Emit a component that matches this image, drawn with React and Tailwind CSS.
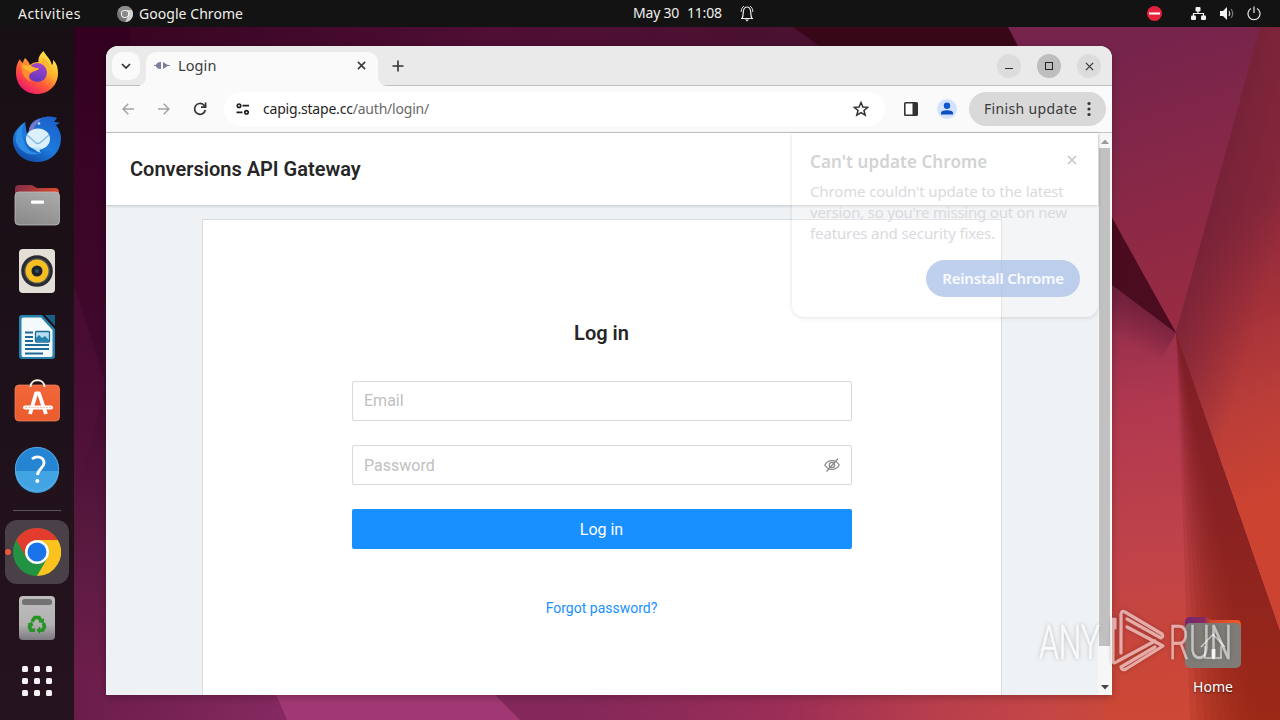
import React from "react";

const ui = "font-['Noto_Sans',sans-serif]";

const foldEdges = [1190, 1197, 1204, 1211, 1218, 1225, 1231, 1237, 1243, 1248, 1253, 1258];

function Wallpaper() {
  return (
    <svg className="absolute inset-0" width="1280" height="720" viewBox="0 0 1280 720">
      <defs>
        <linearGradient id="w-top" x1="74" y1="0" x2="1000" y2="0" gradientUnits="userSpaceOnUse">
          <stop offset="0" stopColor="#34031f" />
          <stop offset="0.45" stopColor="#4f0e34" />
          <stop offset="0.8" stopColor="#4a1130" />
          <stop offset="1" stopColor="#400a20" />
        </linearGradient>
        <linearGradient id="w-left" x1="0" y1="27" x2="0" y2="720" gradientUnits="userSpaceOnUse">
          <stop offset="0" stopColor="#33001f" />
          <stop offset="0.5" stopColor="#420a2e" />
          <stop offset="0.75" stopColor="#5a1a40" />
          <stop offset="1" stopColor="#741f4f" />
        </linearGradient>
        <linearGradient id="w-bottom" x1="74" y1="0" x2="1280" y2="0" gradientUnits="userSpaceOnUse">
          <stop offset="0" stopColor="#6b1d4a" />
          <stop offset="0.17" stopColor="#852960" />
          <stop offset="0.42" stopColor="#84285a" />
          <stop offset="0.58" stopColor="#9a2d57" />
          <stop offset="0.72" stopColor="#b93f4c" />
          <stop offset="0.8" stopColor="#c34546" />
          <stop offset="0.87" stopColor="#cb4838" />
          <stop offset="1" stopColor="#b4341f" />
        </linearGradient>
        <linearGradient id="w-ru" x1="1112" y1="60" x2="1190" y2="310" gradientUnits="userSpaceOnUse">
          <stop offset="0" stopColor="#77244c" />
          <stop offset="0.5" stopColor="#882847" />
          <stop offset="1" stopColor="#982b42" />
        </linearGradient>
        <linearGradient id="w-rr" x1="1195" y1="230" x2="1310" y2="480" gradientUnits="userSpaceOnUse">
          <stop offset="0" stopColor="#8a283b" />
          <stop offset="0.35" stopColor="#a43139" />
          <stop offset="0.65" stopColor="#b93d39" />
          <stop offset="1" stopColor="#cc4331" />
        </linearGradient>
        <linearGradient id="w-rrShade" x1="1218" y1="180" x2="1290" y2="200" gradientUnits="userSpaceOnUse">
          <stop offset="0" stopColor="#6d1f38" stopOpacity="0.65" />
          <stop offset="1" stopColor="#6d1f38" stopOpacity="0" />
        </linearGradient>
        <linearGradient id="w-rl" x1="1112" y1="300" x2="1150" y2="720" gradientUnits="userSpaceOnUse">
          <stop offset="0" stopColor="#8f2c4b" />
          <stop offset="0.25" stopColor="#b0384f" />
          <stop offset="0.6" stopColor="#c0434a" />
          <stop offset="0.85" stopColor="#c94639" />
          <stop offset="1" stopColor="#cd4835" />
        </linearGradient>
        <linearGradient id="w-wedge" x1="0" y1="333" x2="0" y2="720" gradientUnits="userSpaceOnUse">
          <stop offset="0" stopColor="#7c1c24" />
          <stop offset="0.5" stopColor="#86201f" />
          <stop offset="1" stopColor="#982614" />
        </linearGradient>
        <linearGradient id="w-fold" x1="1143" y1="309" x2="1125" y2="342" gradientUnits="userSpaceOnUse">
          <stop offset="0" stopColor="#5c1830" stopOpacity="0.55" />
          <stop offset="1" stopColor="#5c1830" stopOpacity="0" />
        </linearGradient>
      </defs>
      <rect width="1280" height="720" fill="url(#w-top)" />
      <rect width="130" height="720" fill="url(#w-left)" />
      <path d="M74 285L106 385L74 500Z" fill="#5a1440" opacity="0.35" />
      <rect y="680" width="1280" height="40" fill="url(#w-bottom)" />
      <path d="M270 680H480L520 720H287Z" fill="#a23873" />
      <path d="M793 27H1008L1018 50H825Z" fill="#380818" />
      <path d="M1008 27H1262L1176 333L1090 180Z" fill="url(#w-ru)" />
      <path d="M1260 27H1280V632L1176 333Z" fill="url(#w-rr)" />
      <path d="M1260 27H1280V632L1176 333Z" fill="url(#w-rrShade)" />
      <path d="M1105 205L1176 333L1105 280Z" fill="#4a0c1e" />
      <path d="M1105 280L1176 333L1280 632V720H1105Z" fill="url(#w-rl)" />
      <path d="M1105 280L1176 333L1150 380H1105Z" fill="url(#w-fold)" />
      {foldEdges.map((x) => (
        <path key={x} d={`M1176 333L1280 632V720H${x}Z`} fill="url(#w-wedge)" opacity="0.19" />
      ))}
    </svg>
  );
}

function Firefox() {
  return (
    <svg width="48" height="48" viewBox="0 0 48 48">
      <defs>
        <linearGradient id="ff1" x1="38" y1="6" x2="12" y2="42" gradientUnits="userSpaceOnUse">
          <stop offset="0" stopColor="#ffe94a" />
          <stop offset="0.35" stopColor="#ffb02c" />
          <stop offset="0.65" stopColor="#ff5a37" />
          <stop offset="1" stopColor="#ee1a6b" />
        </linearGradient>
        <linearGradient id="ff2" x1="28" y1="14" x2="22" y2="34" gradientUnits="userSpaceOnUse">
          <stop offset="0" stopColor="#a848c8" />
          <stop offset="1" stopColor="#5b35bd" />
        </linearGradient>
      </defs>
      <path d="M30.500 2C27 5 25 9 25.500 13C22 13 19 14 17 16C16 13 14 11 12 9C11 11 10 12 10 14C8 13 7 11 7 10C3 15 3 21 3 24C3 36 12 45 24 45C36 45 45 36 45 24C45 18 43 13 40 11C40 14 40 15 39 16C37 9 33 7 30.500 2Z" fill="url(#ff1)" />
      <circle cx="24.500" cy="23.500" r="9.500" fill="url(#ff2)" />
      <path d="M8 15C11 17 14 16 17 16C20 19 24 19 26 19.500C25 22 20 22 17 25C15 28 16 31 19 33C12 31 8 25 8 15Z" fill="#ff8a30" />
      <path d="M9 15C12 17 14 16 17 16C20 19 24 19 26 19.500C25 21 21 21.500 18 23C13 22 10 19 9 15Z" fill="#ffb52e" />
      <path d="M28 14C33 16 35 22 34 27C38 24 38 17 34 12L30 9Z" fill="#ffb72f" />
    </svg>
  );
}

function Thunderbird() {
  return (
    <svg width="50" height="48" viewBox="0 0 50 48">
      <defs>
        <linearGradient id="tb1" x1="38" y1="4" x2="16" y2="44" gradientUnits="userSpaceOnUse">
          <stop offset="0" stopColor="#1b62cc" />
          <stop offset="0.6" stopColor="#1d7bdc" />
          <stop offset="1" stopColor="#1252ad" />
        </linearGradient>
      </defs>
      <path d="M13 7C5 13 1 18 1 25C1 38 12 47 25 47C39 47 49 37 49 23C49 17 46 13 44 10L48 8C46 7 44 7 42 7L45 3C40 1 34 1 29 3C21 5 18 9 17 15L15 19C14 15 14 11 13 7Z" fill="url(#tb1)" />
      <path d="M13 7C9 13 9 20 13 29C16 36 21 38 28 38C20 42 8 38 4 27C3 18 7 11 13 7Z" fill="#2f8ce6" />
      <path d="M17 14C20 7 25 4 29 4C25 8 22 11 22 14L17 17Z" fill="#7c78c8" />
      <ellipse cx="26" cy="24" rx="12" ry="10.500" fill="#dceffd" />
      <path d="M21 32C22 35 26 37 29 38C27 36 27 34 30 33Z" fill="#b7e3fb" />
      <path d="M15 20L24 28C26 29 27 29 29 27L37 20" fill="none" stroke="#83b9e2" strokeWidth="1.400" />
      <circle cx="27" cy="8.500" r="1.300" fill="#bfe3fc" />
    </svg>
  );
}

function Files() {
  return (
    <svg width="48" height="48" viewBox="0 0 48 48">
      <defs>
        <linearGradient id="fl1" x1="0" y1="0" x2="1" y2="0.3">
          <stop offset="0" stopColor="#7d2c49" />
          <stop offset="1" stopColor="#de4a2c" />
        </linearGradient>
        <linearGradient id="fl2" x1="0.300" y1="1" x2="0.700" y2="0">
          <stop offset="0" stopColor="#8b8b8b" />
          <stop offset="1" stopColor="#a9a9a9" />
        </linearGradient>
      </defs>
      <path d="M2 8Q2 4 6 4H18Q20 4 21.500 5.500Q23 7 25 7H42Q46 7 46 11V20H2Z" fill="url(#fl1)" />
      <rect x="2" y="11" width="44.500" height="33" rx="4" fill="url(#fl2)" stroke="#bdbdbd" strokeWidth="0.800" />
      <rect x="18" y="19.500" width="13" height="3.200" rx="1" fill="#fff" />
    </svg>
  );
}

function Speaker() {
  return (
    <svg width="48" height="48" viewBox="0 0 48 48">
      <rect x="6" y="2" width="36" height="44" rx="4" fill="#e3dfd7" />
      <circle cx="24" cy="24" r="15.800" fill="#2a2b33" />
      <circle cx="24" cy="24" r="12.800" fill="#50525a" />
      <circle cx="24" cy="24" r="11.500" fill="#f5bf22" />
      <circle cx="24" cy="24" r="5.500" fill="#1b2230" />
      <circle cx="24" cy="24" r="2" fill="#3b4a5c" />
    </svg>
  );
}

function Writer() {
  return (
    <svg width="48" height="48" viewBox="0 0 48 48">
      <path d="M9 2H29L42 16V43Q42 46 39 46H9Q6 46 6 43V5Q6 2 9 2Z" fill="#2581ad" />
      <path d="M32 2H42V13Z" fill="#1b5d86" />
      <path d="M10 4.500H28L39.500 17V42Q39.500 44 37.500 44H10Q8.500 44 8.500 42V6.500Q8.500 4.500 10 4.500Z" fill="#f4fafc" />
      <path d="M12 19.500H20M12 24H20M12 28H20M12 32H36M12 36H36M12 40.500H30" stroke="#1e6a94" strokeWidth="2" />
      <rect x="22.500" y="18.500" width="14" height="10.500" rx="1" fill="#b5def3" stroke="#1e6a94" strokeWidth="1.300" />
      <path d="M23 28V25L26 22L29 25L32 23L36 27V28.500Z" fill="#2581ad" />
    </svg>
  );
}

function Software() {
  return (
    <svg width="48" height="48" viewBox="0 0 48 48">
      <defs>
        <linearGradient id="sw" x1="0" y1="0" x2="0" y2="1">
          <stop offset="0" stopColor="#f3673a" />
          <stop offset="1" stopColor="#ea5b2d" />
        </linearGradient>
      </defs>
      <rect x="2" y="6" width="44.500" height="36" rx="4" fill="url(#sw)" stroke="#f28a64" strokeWidth="0.700" />
      <path d="M17.500 8C17.500 -1 31.500 -1 31.500 8" fill="none" stroke="#fff0e6" strokeWidth="2" />
      <path d="M17 35L23 14.500H26L33 35" fill="none" stroke="#fff" strokeWidth="3.800" strokeLinejoin="round" />
      <path d="M12 28.500H38" stroke="#fff" strokeWidth="4" strokeLinecap="round" />
      <path d="M12 28.500H38" stroke="#f3b296" strokeWidth="0.800" strokeDasharray="2 1" />
    </svg>
  );
}

function Help() {
  return (
    <svg className="-mt-px" width="48" height="48" viewBox="0 0 48 48">
      <circle cx="24" cy="24" r="22" fill="#2585d2" />
      <path d="M2 26H46A22 22 0 0 1 2 26Z" fill="#42a3e3" />
      <circle cx="24" cy="24" r="21.600" fill="none" stroke="#5cb1ea" strokeWidth="0.800" />
      <path d="M19 14C24 10 31 12 31 18C31 23 24.500 24 24.500 30" fill="none" stroke="#fff" strokeWidth="2.800" />
      <circle cx="24.300" cy="36" r="2" fill="#fff" />
    </svg>
  );
}

function Chrome({ size = 48, mono = false }) {
  const c = mono ? ["#8c8c8c", "#d2d2d2", "#767676", "#8a8a8a"] : ["#e33b2e", "#fcc31e", "#229342", "#1a73e8"];
  return (
    <svg width={size} height={size} viewBox="0 0 48 48">
      <circle cx="24" cy="24" r="24" fill={c[2]} />
      <path d="M24 12H44.800A24 24 0 0 1 24 48L34.400 30Z" fill={c[1]} />
      <path d="M3.200 12A24 24 0 0 1 44.800 12H24L13.600 30Z" fill={c[0]} />
      <circle cx="24" cy="24" r="12" fill="#fff" />
      <circle cx="24" cy="24" r="9.500" fill={c[3]} />
    </svg>
  );
}

function Trash() {
  return (
    <svg width="48" height="48" viewBox="0 0 48 48">
      <defs>
        <linearGradient id="tr" x1="0" y1="0" x2="0" y2="1">
          <stop offset="0" stopColor="#bdbdbd" />
          <stop offset="0.650" stopColor="#b2b2b2" />
          <stop offset="1" stopColor="#7c7880" />
        </linearGradient>
      </defs>
      <rect x="6" y="2" width="36" height="44" rx="4" fill="url(#tr)" />
      <rect x="9" y="5" width="30" height="6" rx="2.500" fill="#727272" />
      <g fill="none" stroke="#269326" strokeWidth="3.600">
        <path d="M19 27.500L21.700 23.500H26L28 27" />
        <path d="M30.500 29L31.500 33L29.500 36.300H26" />
        <path d="M22 36.300H18L16.500 33L18 29.500" />
      </g>
      <path d="M25.500 28.500L31 24V29Z M27 32.500V40L23.500 36.300Z M14 30L19 27.500L20.500 32Z" fill="#269326" />
    </svg>
  );
}

function Grid9() {
  return (
    <div className="grid grid-cols-3 gap-[6px]">
      {Array.from({ length: 9 }, (_, i) => (
        <span key={i} className="h-[6px] w-[6px] rounded-[1.500px] bg-[#f6f2f5]" />
      ))}
    </div>
  );
}

function DockItem({ children, className = "" }) {
  return <div className={"flex h-[66px] w-full shrink-0 items-center justify-center " + className}>{children}</div>;
}

function Dock() {
  return (
    <aside className="flex h-full w-[74px] shrink-0 flex-col items-center bg-gradient-to-b from-[#180f15] to-[#25131e] pt-[13px]">
      <DockItem><Firefox /></DockItem>
      <DockItem><Thunderbird /></DockItem>
      <DockItem><Files /></DockItem>
      <DockItem><Speaker /></DockItem>
      <DockItem><Writer /></DockItem>
      <DockItem><Software /></DockItem>
      <DockItem><Help /></DockItem>
      <div className="mt-2 mb-2 h-px w-12 shrink-0 bg-[#5d535a]" />
      <DockItem className="relative">
        <div className="flex h-16 w-16 items-center justify-center rounded-xl bg-[#4a4047]"><Chrome /></div>
        <span className="absolute left-[5px] h-[6px] w-[6px] rounded-full bg-[#ef5a35]" />
      </DockItem>
      <DockItem><Trash /></DockItem>
      <div className="mt-[15px]"><Grid9 /></div>
    </aside>
  );
}

function TopBar() {
  return (
    <header className={"relative flex h-[27px] shrink-0 items-center bg-[#131313] text-[14px] leading-[26px] text-[#f0eeeb] " + ui}>
      <span className="ml-[18px] w-[99px] tracking-[0.450px]">Activities</span>
      <span className="flex w-[22px] items-center"><Chrome size={16} mono /></span>
      <span className="w-[494px] tracking-[0.050px]">Google Chrome</span>
      <span className="-mt-px w-[54px] tracking-[-0.200px]">May 30</span>
      <span className="-mt-px w-[53px] tracking-[-0.200px]">11:08</span>
      <svg className="-mt-px" width="14" height="17" viewBox="0 0 14 17" fill="none" stroke="#eee" strokeWidth="1.200">
        <path d="M1 13.500H13M2 13.500C3.500 11 3 8 3.500 5.500C4 3 5.500 2 7 2C8.500 2 10 3 10.500 5.500C11 8 10.500 11 12 13.500" />
        <path d="M1.200 7C1 4 2.500 2 4 1M12.800 7C13 4 11.500 2 10 1" strokeWidth="0.900" />
        <path d="M5 14.500H9L7 16.500Z" fill="#eee" stroke="none" />
      </svg>
      <div className="-mt-px ml-auto flex items-center pr-[19px]">
        <svg width="15" height="15" viewBox="0 0 15 15"><circle cx="7.500" cy="7.500" r="7.500" fill="#e6213c" /><rect x="2" y="6.500" width="11" height="2" fill="#fff" /></svg>
        <svg className="ml-[28px]" width="17" height="15" viewBox="0 0 17 15" fill="#f2f2f2">
          <rect x="5.500" y="1" width="5" height="4.500" rx="1" /><rect x="1" y="9.500" width="5" height="4.500" rx="1" /><rect x="11" y="9.500" width="5" height="4.500" rx="1" />
          <path d="M8 5V7.500M3.500 10V7.500H13.500V10" fill="none" stroke="#f2f2f2" strokeWidth="1.200" />
        </svg>
        <svg className="ml-[12px]" width="16" height="15" viewBox="0 0 16 15">
          <path d="M1 5H4L8 1V14L4 10H1Z" fill="#f2f2f2" />
          <path d="M10 5Q11.500 7.500 10 10" fill="none" stroke="#ccc" strokeWidth="1.200" />
          <path d="M12 3Q15.500 7.500 12 12" fill="none" stroke="#777" strokeWidth="1.200" />
        </svg>
        <svg className="ml-[12px]" width="14" height="15" viewBox="0 0 14 15" fill="none" stroke="#e8e8e8" strokeWidth="1.200">
          <path d="M4 2.500A6 6 0 1 0 10 2.500M7 0.500V7" />
        </svg>
      </div>
    </header>
  );
}

const X = ({ size = 10, w = 1.5 }) => (
  <svg width={size} height={size} viewBox="0 0 10 10" fill="none" stroke="currentColor" strokeWidth={w}><path d="M1 1L9 9M9 1L1 9" /></svg>
);

function TabStrip() {
  return (
    <div className={"flex h-[40px] shrink-0 border-b border-[#bdbebe] bg-[#eaeaea] text-[#3c3c3c] " + ui}>
      <div className="mt-[6px] ml-[6px] flex h-[28px] w-[28px] shrink-0 items-center justify-center rounded-[10px] bg-[#fafafa]">
        <svg width="10" height="7" viewBox="0 0 10 7" fill="none" stroke="#333" strokeWidth="1.700"><path d="M1 1L5 5L9 1" /></svg>
      </div>
      <svg className="mt-auto -mb-px shrink-0" width="6" height="10" viewBox="0 0 6 10"><path d="M6 0V10H-4Q6 10 6 0Z" fill="#fafafa" /></svg>
      <div className="mt-[6px] -mb-px flex w-[232px] shrink-0 items-center rounded-t-[10px] bg-[#fafafa] pb-[8px] pl-[8px]">
        <svg width="16" height="9" viewBox="0 0 16 9" fill="#7b7f9c">
          <path d="M1.500 4.500Q3 1 6.500 1H7V8H6.500Q3 8 1.500 4.500Z M9 1L14.500 4.500L9 8Z" /><path d="M0 3.900H3V5.100H0Z M13 3.900H16V5.100H13Z" />
        </svg>
        <span className="ml-[8px] text-[14.500px] leading-5 tracking-[0.100px]">Login</span>
        <span className="mr-[12px] ml-auto"><X size={9} w={1.8} /></span>
      </div>
      <svg className="mt-auto -mb-px shrink-0" width="10" height="10" viewBox="0 0 10 10"><path d="M0 0V10H10Q0 10 0 0Z" fill="#fafafa" /></svg>
      <svg className="mt-[14px] ml-[4px]" width="12" height="12" viewBox="0 0 12 12" stroke="#333" strokeWidth="1.600"><path d="M6 0.500V11.500M0.500 6H11.500" /></svg>
      <div className="mt-[8px] mr-[11px] ml-auto flex gap-4">
        <span className="flex h-6 w-6 items-end justify-center rounded-full bg-[#dcdcdc] pb-[9px]"><i className="h-[1px] w-2 bg-[#2f2f2f]" /></span>
        <span className="flex h-6 w-6 items-center justify-center rounded-full bg-[#bebebe]"><i className="h-2 w-2 border border-[#222]" /></span>
        <span className="flex h-6 w-6 items-center justify-center rounded-full bg-[#dcdcdc]"><X size={9} w={1.4} /></span>
      </div>
    </div>
  );
}

function Toolbar() {
  return (
    <div className={"flex h-[47px] shrink-0 items-center border-b border-[#c4c4c6] bg-[#fafafa] " + ui}>
      <svg className="ml-[16px]" width="12" height="12" viewBox="0 0 12 12" fill="none" stroke="#a3a3a3" strokeWidth="1.500"><path d="M12 6H1M6.300 0.700L1 6L6.300 11.300" /></svg>
      <svg className="ml-[24px]" width="12" height="12" viewBox="0 0 12 12" fill="none" stroke="#a3a3a3" strokeWidth="1.500"><path d="M0 6H11M5.700 0.700L11 6L5.700 11.300" /></svg>
      <svg className="ml-[23px]" width="14" height="14" viewBox="0 0 14 14" fill="none" stroke="#333" strokeWidth="1.700"><path d="M12.300 8A5.400 5.400 0 1 1 10.800 3L12.500 4.800" /><path d="M12.600 0.500V5.200H8" /></svg>
      <div className="ml-[17px] flex h-[34px] w-[661px] items-center rounded-full bg-white">
        <svg className="ml-[12px]" width="14" height="12" viewBox="0 0 14 12" fill="none" stroke="#1f1f1f" strokeWidth="1.700">
          <circle cx="3" cy="2.700" r="1.700" /><path d="M6.500 2.700H13M0.500 9.300H6.500" /><circle cx="10.500" cy="9.300" r="1.700" />
        </svg>
        <span className="ml-[13px] text-[14px] leading-5 tracking-[-0.200px] text-[#1f1f1f]">capig.stape.cc<span className="text-[#6a6a6a]">/auth/login/</span></span>
        <svg className="mr-[16px] ml-auto" width="16" height="16" viewBox="0 0 16 16" fill="none" stroke="#333" strokeWidth="1.500"><path d="M8 1.500L9.900 6L14.700 6.300L11 9.500L12.200 14.200L8 11.600L3.800 14.200L5 9.500L1.300 6.300L6.100 6Z" /></svg>
      </div>
      <svg className="ml-[19px]" width="14" height="14" viewBox="0 0 14 14"><rect x="0.800" y="0.800" width="12.400" height="12.400" rx="0.800" fill="#fff" stroke="#333" strokeWidth="1.600" /><rect x="8.500" y="1" width="5" height="12" fill="#333" /></svg>
      <svg className="ml-[19px]" width="20" height="20" viewBox="0 0 20 20"><circle cx="10" cy="10" r="10" fill="#d3e3fd" /><circle cx="10" cy="6.700" r="3.200" fill="#0b57d0" /><path d="M4 15.500V13.800Q4 11.200 10 11.200Q16 11.200 16 13.800V15.500Z" fill="#0b4fc0" /></svg>
      <div className="ml-[12px] flex h-[34px] w-[137px] items-center rounded-full bg-[#d9d9d9] pl-[15px] text-[14px] text-[#3a3a3a]">
        <span className="-mt-[2px] w-[103px] tracking-[0.350px] whitespace-nowrap">Finish update</span>
        <svg width="4" height="16" viewBox="0 0 4 16" fill="#333"><circle cx="2" cy="2.500" r="1.600" /><circle cx="2" cy="8" r="1.600" /><circle cx="2" cy="13.500" r="1.600" /></svg>
      </div>
    </div>
  );
}

function EyeOff() {
  return (
    <svg width="16" height="16" viewBox="0 0 16 16" fill="none" stroke="#8c8c8c" strokeWidth="1.300">
      <path d="M0.800 8C4 2.200 12 2.200 15.200 8C12 13.800 4 13.800 0.800 8Z" /><circle cx="8" cy="8" r="2.600" /><path d="M14 1.500L2.500 14.500" />
    </svg>
  );
}

function UpdateBubble() {
  return (
    <div className={"absolute top-0 left-[686px] flex h-[184px] w-[306px] flex-col rounded-b-[12px] bg-white/25 px-[18px] pt-[18px] shadow-[0_1px_4px_rgba(0,0,0,0.12)] " + ui}>
      <div className="flex justify-between text-[#d2d3d4]">
        <h2 className="text-[17px] leading-[22px] font-semibold tracking-[0.080px] whitespace-nowrap">Can't update Chrome</h2>
        <span className="mt-[4px] mr-[3px] text-[#bfc0c1]"><X size={10} w={1.4} /></span>
      </div>
      <p className="mt-[8px] text-[15px] leading-[21px] whitespace-nowrap text-[#d9dadd]">
        <span className="block tracking-[-0.140px]">Chrome couldn't update to the latest</span>
        <span className="block tracking-[-0.210px]">version, so you're missing out on new</span>
        <span className="block tracking-[-0.120px]">features and security fixes.</span>
      </p>
      <button className="mt-[16px] flex h-[37px] w-[154px] shrink-0 items-center justify-center self-end rounded-full bg-[#aac0e8]/75 text-[15px] font-semibold tracking-[-0.200px] whitespace-nowrap text-white/90">Reinstall Chrome</button>
    </div>
  );
}

function Page() {
  return (
    <div className="relative flex min-h-0 flex-1 font-[Roboto,sans-serif]">
      <div className="flex min-h-0 w-[992px] flex-col bg-[#eff2f5]">
        <header className="z-0 flex h-[72px] shrink-0 items-center bg-white px-6 shadow-[0_1px_3px_rgba(0,0,0,0.2)]">
          <h1 className="text-[20px] leading-7 font-semibold text-[#262626]">Conversions API Gateway</h1>
        </header>
        <main className="mx-auto mt-[14px] flex w-[800px] flex-1 flex-col items-center border border-b-0 border-[#d9dbdd] bg-white pt-[99px]">
          <h2 className="mr-px text-[20px] leading-7 font-semibold text-[#262626]">Log in</h2>
          <div className="mt-[34px] flex h-10 w-[500px] items-center rounded-[2px] border border-[#d9d9d9] px-[11px] text-[16px] text-[#bfbfbf]">Email</div>
          <div className="mt-6 flex h-10 w-[500px] items-center justify-between rounded-[2px] border border-[#d9d9d9] px-[11px] text-[16px] text-[#bfbfbf]"><span className="pt-[2px]">Password</span><EyeOff /></div>
          <button className="mt-6 h-10 w-[500px] rounded-[2px] bg-[#1890ff] pt-[2px] pr-px text-[16px] text-white">Log in</button>
          <a className="mt-[48px] mr-px text-[14px] leading-[22px] text-[#1890ff]">Forgot password?</a>
        </main>
      </div>
      <div className="flex w-[14px] flex-col items-center bg-[#f7f7f7] pr-px">
        <svg className="mt-[6px] shrink-0" width="8" height="5" viewBox="0 0 8 5"><path d="M0 5L4 0.500L8 5Z" fill="#9a9a9a" /></svg>
        <div className="mt-[4px] h-[498px] w-[11px] shrink-0 bg-[#c1c1c1]" />
        <svg className="mt-auto mb-[5px] shrink-0" width="8" height="5" viewBox="0 0 8 5"><path d="M0 0L4 4.500L8 0Z" fill="#454545" /></svg>
      </div>
      <UpdateBubble />
    </div>
  );
}

function Home() {
  return (
    <div className={"absolute top-[589px] left-[1083px] flex w-[112px] flex-col items-center " + ui}>
      <svg width="58" height="53" viewBox="0 0 58 53">
        <defs><linearGradient id="hm" x1="0" y1="0" x2="1" y2="0"><stop offset="0" stopColor="#762670" /><stop offset="0.350" stopColor="#852c5e" /><stop offset="0.450" stopColor="#d4452c" /><stop offset="1" stopColor="#ee5a27" /></linearGradient></defs>
        <path d="M1 6Q1 1 6 1H20Q23 1 24.500 3Q26 4 28 4H53Q57 4 57 9V22H1Z" fill="url(#hm)" />
        <rect x="1" y="7" width="56" height="45" rx="5" fill="#7f7c78" />
        <path d="M17 31L29 18.500L41 31M21 30V42H27.500M31.500 42H37V30" fill="none" stroke="#d0cecc" strokeWidth="1.600" />
        <rect x="27.500" y="33" width="4" height="9.800" fill="#efefee" />
      </svg>
      <span className="mt-[7px] text-[14px] leading-[22px] text-white [text-shadow:0_1px_2px_rgba(0,0,0,0.6)]">Home</span>
    </div>
  );
}

function Watermark() {
  return (
    <svg className="absolute top-[600px] left-[1030px] opacity-55 [filter:drop-shadow(0_0_2px_rgba(0,0,0,0.4))]" width="240" height="90" viewBox="0 0 240 90">
      <g fill="#fff" stroke="#fff" strokeWidth="0.700" fontFamily="Roboto, sans-serif" fontWeight="300" fontSize="48">
        <text x="9" y="59" textLength="61" lengthAdjust="spacingAndGlyphs">ANY</text>
        <text x="139" y="59" textLength="63" lengthAdjust="spacingAndGlyphs">RUN</text>
      </g>
      <g fill="none" stroke="#fff" strokeWidth="3.200" strokeLinejoin="round" strokeLinecap="round">
        <path d="M91 53V14Q92 10 95 12L132 34Q134 36 131 38L97 19" />
        <path d="M91 53L131 30M98 50V24L132 44Q134 46 131 49L96 70Q92 71 91 67L130 45" strokeWidth="0" />
        <path d="M97 27L133 46L96 69Q92 71 91 67L125 47" />
        <path d="M85 28V19M83 19V62Q84 64 88 61L125 41" />
      </g>
    </svg>
  );
}

export default function App() {
  return (
    <div className="relative flex h-[720px] w-[1280px] flex-col overflow-hidden">
      <Wallpaper />
      <TopBar />
      <div className="relative flex min-h-0 flex-1">
        <Dock />
        <div className="relative flex-1 pt-[19px] pl-[32px]">
          <div className="flex h-[649px] w-[1006px] flex-col overflow-hidden rounded-t-[12px] bg-white shadow-[0_2px_8px_rgba(0,0,0,0.25)]">
            <TabStrip />
            <Toolbar />
            <Page />
          </div>
          <Home />
        </div>
      </div>
      <Watermark />
    </div>
  );
}
